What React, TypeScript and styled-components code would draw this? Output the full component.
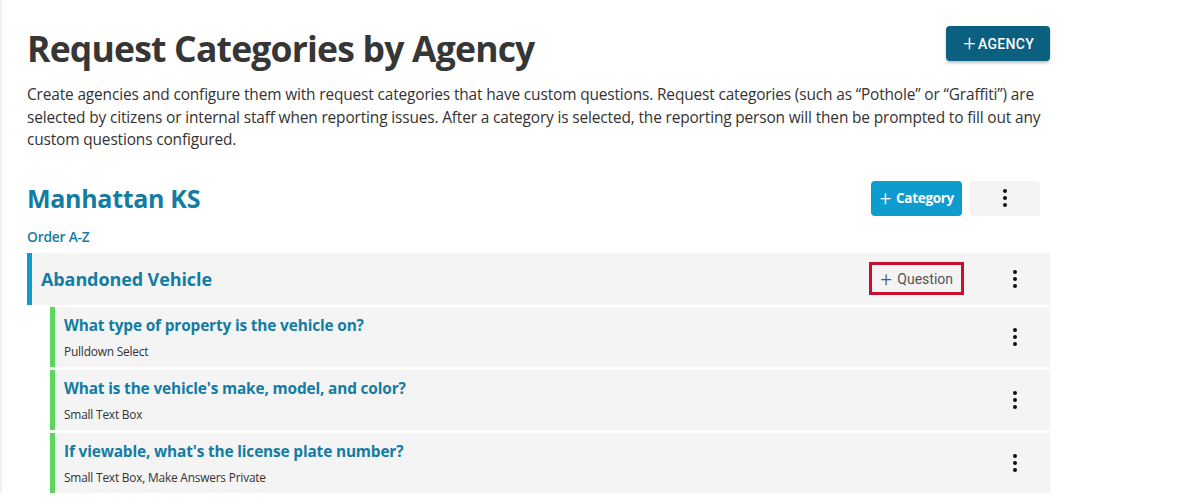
import styled, { createGlobalStyle } from 'styled-components'
import { ReactElement } from 'react'

const GlobalStyle = createGlobalStyle`
  body {
    margin: 0;
    background: #fff;
    font-family: 'Open Sans', 'Noto Sans', sans-serif;
    color: #333;
  }
`

const teal = '#137ca3'
const panelBg = '#f4f4f4'

type Question = { title: string; kind: string }

const questions: Question[] = [
  { title: 'What type of property is the vehicle on?', kind: 'Pulldown Select' },
  { title: "What is the vehicle's make, model, and color?", kind: 'Small Text Box' },
  {
    title: "If viewable, what's the license plate number?",
    kind: 'Small Text Box, Make Answers Private',
  },
]

const Page = styled.div`
  width: 1023px;
  padding: 26px 0 0 25px;
  border-left: 2px solid #f0f0f0;
`

const Header = styled.header`
  display: flex;
  justify-content: space-between;
  align-items: flex-start;
`

const Title = styled.h1`
  margin: 0;
  font-size: 35.5px;
  line-height: 44px;
  font-weight: 700;
  color: #363636;
  letter-spacing: -0.8px;
`

const AgencyButton = styled.button`
  display: flex;
  align-items: center;
  height: 35px;
  padding: 0 16px 0 17px;
  border: none;
  border-radius: 4px;
  background: #0b5f7f;
  color: #fff;
  font-family: Roboto, sans-serif;
  font-weight: 500;
  font-size: 14px;
  letter-spacing: 0.3px;
  box-shadow: 0 2px 3px rgba(0, 0, 0, 0.25);
`

const Plus = styled.span<{ size: number }>`
  font-family: Roboto, sans-serif;
  font-weight: 300;
  font-size: ${({ size }) => size}px;
  line-height: 1;
  margin-right: 2px;
`

const Description = styled.p`
  margin: 13px 0 0;
  font-size: 15.45px;
  line-height: 22.5px;
  color: #333;
  letter-spacing: -0.15px;
`

const AgencyHeader = styled.div`
  display: flex;
  justify-content: space-between;
  align-items: center;
  margin-top: 30px;
  padding-right: 10px;
`

const AgencyName = styled.h2`
  margin: 0;
  font-size: 25px;
  font-weight: 700;
  color: ${teal};
  letter-spacing: -0.3px;
`

const AgencyActions = styled.div`
  display: flex;
  gap: 8px;
`

const CategoryButton = styled.button`
  display: flex;
  align-items: center;
  height: 35px;
  padding: 0 8px 0 9px;
  border: none;
  border-radius: 4px;
  background: #0e9ccf;
  color: #fff;
  font-family: 'Open Sans', sans-serif;
  font-weight: 700;
  font-size: 13.5px;
  letter-spacing: -0.3px;
`

const MenuButton = styled.button<{ filled?: boolean }>`
  display: flex;
  flex-direction: column;
  align-items: center;
  justify-content: center;
  gap: 3px;
  width: ${({ filled }) => (filled ? 70 : 40)}px;
  height: 35px;
  border: none;
  border-radius: 4px;
  background: ${({ filled }) => (filled ? '#f3f3f3' : 'transparent')};
  padding: 0;
`

const Dot = styled.span`
  width: 4px;
  height: 4px;
  border-radius: 50%;
  background: #111;
`

const OrderLink = styled.a`
  display: block;
  margin-top: 11px;
  font-size: 13.8px;
  font-weight: 600;
  color: ${teal};
  letter-spacing: -0.2px;
`

const CategoryRow = styled.div`
  display: flex;
  align-items: center;
  justify-content: space-between;
  height: 52px;
  margin-top: 7px;
  padding: 0 15px 0 9px;
  background: ${panelBg};
  border-left: 5px solid #0f9bd0;
`

const CategoryName = styled.h3`
  margin: 0;
  font-size: 18px;
  font-weight: 700;
  color: ${teal};
  letter-spacing: -0.1px;
`

const RowActions = styled.div`
  display: flex;
  align-items: center;
  gap: 31px;
`

const QuestionButton = styled.button`
  display: flex;
  align-items: center;
  height: 33px;
  padding: 0 8px 0 9px;
  border: 3px solid #c8102e;
  background: transparent;
  color: #555;
  font-family: Roboto, sans-serif;
  font-size: 14px;
`

const QuestionList = styled.div`
  display: flex;
  flex-direction: column;
  gap: 3px;
  margin-top: 2px;
  padding-left: 23px;
`

const QuestionRow = styled.div`
  display: flex;
  align-items: center;
  justify-content: space-between;
  height: 60px;
  padding: 0 15px 0 9px;
  background: ${panelBg};
  border-left: 5px solid #5cd65c;
`

const QuestionText = styled.div`
  display: flex;
  flex-direction: column;
  gap: 7px;
`

const QuestionTitle = styled.div`
  font-size: 15.4px;
  font-weight: 700;
  color: ${teal};
  letter-spacing: -0.15px;
`

const QuestionKind = styled.div`
  font-size: 11.9px;
  color: #333;
  letter-spacing: -0.2px;
`

const Kebab = ({ filled }: { filled?: boolean }): ReactElement => (
  <MenuButton filled={filled} aria-label="More">
    <Dot />
    <Dot />
    <Dot />
  </MenuButton>
)

export default function App(): ReactElement {
  return (
    <>
      <GlobalStyle />
      <Page>
        <Header>
          <Title>Request Categories by Agency</Title>
          <AgencyButton>
            <Plus size={22}>+</Plus>AGENCY
          </AgencyButton>
        </Header>
        <Description>
          Create agencies and configure them with request categories that have custom questions.
          Request categories (such as “Pothole” or “Graffiti”) are selected by citizens or internal
          staff when reporting issues. After a category is selected, the reporting person will then
          be prompted to fill out any custom questions configured.
        </Description>
        <AgencyHeader>
          <AgencyName>Manhattan KS</AgencyName>
          <AgencyActions>
            <CategoryButton>
              <Plus size={20}>+</Plus>&nbsp;Category
            </CategoryButton>
            <Kebab filled />
          </AgencyActions>
        </AgencyHeader>
        <OrderLink>Order A-Z</OrderLink>
        <CategoryRow>
          <CategoryName>Abandoned Vehicle</CategoryName>
          <RowActions>
            <QuestionButton>
              <Plus size={20}>+</Plus>&nbsp;Question
            </QuestionButton>
            <Kebab />
          </RowActions>
        </CategoryRow>
        <QuestionList>
          {questions.map((q) => (
            <QuestionRow key={q.title}>
              <QuestionText>
                <QuestionTitle>{q.title}</QuestionTitle>
                <QuestionKind>{q.kind}</QuestionKind>
              </QuestionText>
              <Kebab />
            </QuestionRow>
          ))}
        </QuestionList>
      </Page>
    </>
  )
}
